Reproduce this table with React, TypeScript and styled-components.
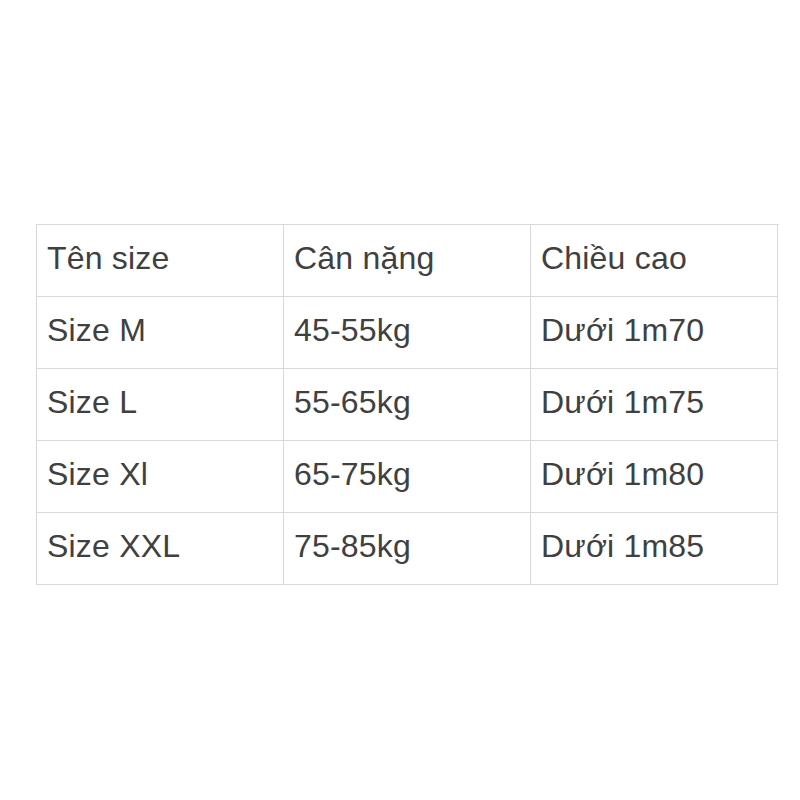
import { createGlobalStyle } from 'styled-components'
import styled from 'styled-components'

const GlobalStyle = createGlobalStyle`
    html, body {
        margin:0;
        padding:0;
        background:#ffffff;
        font-family:"Liberation Sans", Arial, sans-serif;
    }
`

const Page = styled.div`
    width:800px;
    height:800px;
    box-sizing:border-box;
    padding:224px 0 0 36px;
`

const Table = styled.div`
    display:grid;
    grid-template-columns:247px 247px 247px;
    width:742px;
    border-top:1px solid #d9d9d9;
    border-left:1px solid #d9d9d9;
`

const Cell = styled.div`
    height:72px;
    box-sizing:border-box;
    display:flex;
    align-items:center;
    padding:0 0 5px 10px;
    border-right:1px solid #d9d9d9;
    border-bottom:1px solid #d9d9d9;
    font-size:32px;
    letter-spacing:0.2px;
    color:#404040;
    white-space:nowrap;
`

const rows = [
    ['Tên size', 'Cân nặng', 'Chiều cao'],
    ['Size M', '45-55kg', 'Dưới 1m70'],
    ['Size L', '55-65kg', 'Dưới 1m75'],
    ['Size Xl', '65-75kg', 'Dưới 1m80'],
    ['Size XXL', '75-85kg', 'Dưới 1m85'],
]

function App() {
    return (
        <Page>
            <GlobalStyle />
            <Table>
                {rows.map((row, i) =>
                    row.map((text, j) => <Cell key={`${i}-${j}`}>{text}</Cell>)
                )}
            </Table>
        </Page>
    )
}

export default App
